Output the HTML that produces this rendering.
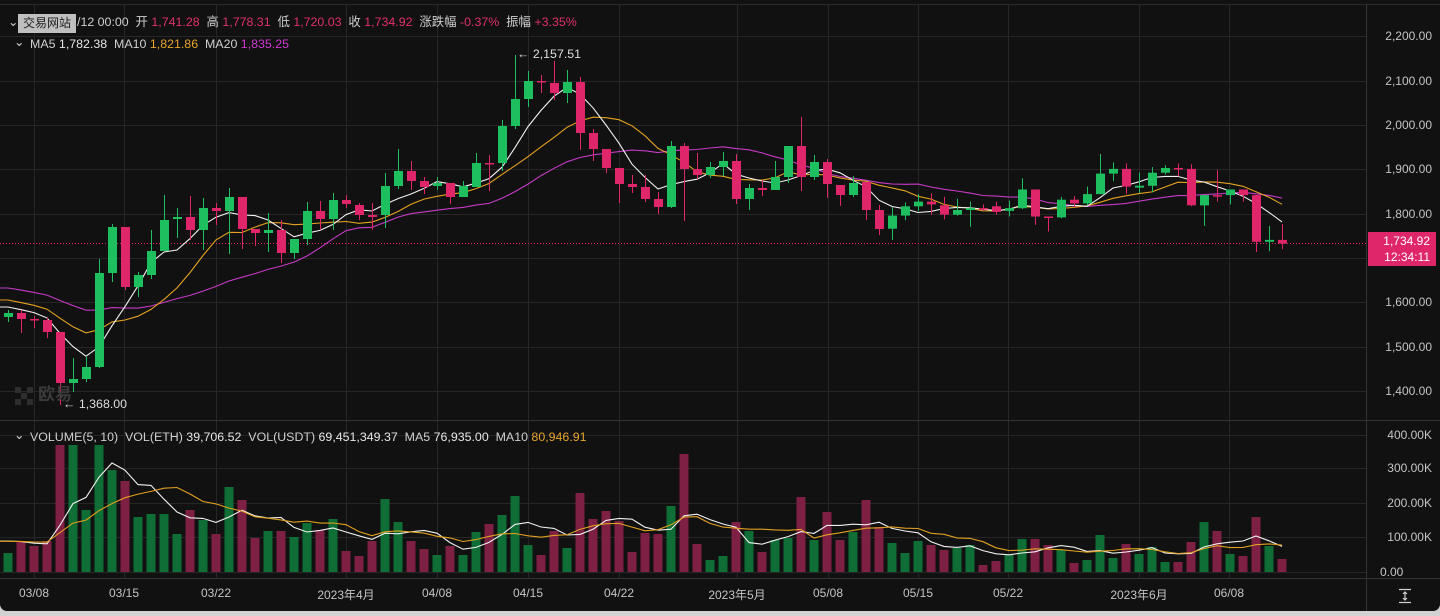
<!DOCTYPE html>
<html><head><meta charset="utf-8">
<style>
html,body{margin:0;padding:0;background:#d2d2d2;}
#w{position:relative;width:1440px;height:616px;overflow:hidden;background:#d2d2d2;font-family:"Liberation Sans","Noto Sans CJK SC",sans-serif;font-size:12px;color:#cfcfcf;}
#p{position:absolute;left:0;top:0;width:1440px;height:611px;background:#111111;border-radius:0 0 7px 7px;overflow:hidden;}
svg{position:absolute;left:0;top:0;}
.t{position:absolute;white-space:nowrap;line-height:14px;font-size:12.4px;}
.r{color:#e0306e}.o{color:#e7a52a}.m{color:#cf38cf}.wv{color:#e6e6e6}
.tip{position:absolute;left:18px;top:14px;width:58px;height:19px;background:#bfbfbf;color:#222;font-size:12px;line-height:19px;text-align:center;}
.ax{position:absolute;right:8px;color:#c4c4c4;font-size:12px;}
.dt{position:absolute;top:586px;color:#c4c4c4;font-size:12px;transform:translateX(-50%);}
</style></head><body>
<div id="w"><div id="p">
<svg id="s" width="1440" height="611" xmlns="http://www.w3.org/2000/svg"></svg>
<div class="t" style="left:8px;top:15px;color:#ccc">⌄</div>
<div class="tip">交易网站</div>
<div class="t" style="left:77px;top:15px;">/12 00:00&nbsp;&nbsp;开 <span class="r">1,741.28</span>&nbsp;&nbsp;高 <span class="r">1,778.31</span>&nbsp;&nbsp;低 <span class="r">1,720.03</span>&nbsp;&nbsp;收 <span class="r">1,734.92</span>&nbsp;&nbsp;涨跌幅 <span class="r">-0.37%</span>&nbsp;&nbsp;振幅 <span class="r">+3.35%</span></div>
<div class="t" style="left:14px;top:35px;">⌄</div>
<div class="t" style="left:30px;top:37px;">MA5 <span class="wv">1,782.38</span>&nbsp;&nbsp;MA10 <span class="o">1,821.86</span>&nbsp;&nbsp;MA20 <span class="m">1,835.25</span></div>
<div class="t" style="left:14px;top:428px;">⌄</div>
<div class="t" style="left:30px;top:430px;">VOLUME(5, 10)&nbsp;&nbsp;VOL(ETH) <span class="wv">39,706.52</span>&nbsp;&nbsp;VOL(USDT) <span class="wv">69,451,349.37</span>&nbsp;&nbsp;MA5 <span class="wv">76,935.00</span>&nbsp;&nbsp;MA10 <span class="o">80,946.91</span></div>
<div class="t" style="left:517px;top:47px;color:#ddd">← 2,157.51</div>
<div class="t" style="left:63px;top:397px;color:#ddd">← 1,368.00</div>
<div class="t" style="left:38px;top:385px;color:#3a3a3a;font-size:17px;font-weight:bold;line-height:20px">欧易</div>
<div class="ax" style="top:29px">2,200.00</div>
<div class="ax" style="top:74px">2,100.00</div>
<div class="ax" style="top:118px">2,000.00</div>
<div class="ax" style="top:162px">1,900.00</div>
<div class="ax" style="top:207px">1,800.00</div>
<div class="ax" style="top:295px">1,600.00</div>
<div class="ax" style="top:340px">1,500.00</div>
<div class="ax" style="top:384px">1,400.00</div>
<div style="position:absolute;left:1368px;top:232px;width:68px;height:34px;background:#e0266a;color:#fff;font-size:12px;line-height:16px;text-align:right;padding-top:1px;box-sizing:border-box;padding-right:6px">1,734.92<br>12:34:11</div>
<div class="ax" style="top:428px">400.00K</div>
<div class="ax" style="top:461px">300.00K</div>
<div class="ax" style="top:496px">200.00K</div>
<div class="ax" style="top:530px">100.00K</div>
<div class="ax" style="top:565px;right:auto;left:1380px">0.00</div>
<div class="dt" style="left:34px">03/08</div>
<div class="dt" style="left:124px">03/15</div>
<div class="dt" style="left:216px">03/22</div>
<div class="dt" style="left:346px">2023年4月</div>
<div class="dt" style="left:437px">04/08</div>
<div class="dt" style="left:528px">04/15</div>
<div class="dt" style="left:619px">04/22</div>
<div class="dt" style="left:737px">2023年5月</div>
<div class="dt" style="left:828px">05/08</div>
<div class="dt" style="left:918px">05/15</div>
<div class="dt" style="left:1008px">05/22</div>
<div class="dt" style="left:1139px">2023年6月</div>
<div class="dt" style="left:1229px">06/08</div>
</div></div>
<script>
var C=[[317,313,310,322],[313,319,310,333],[319,320,316,328],[320,332,318,338],[332,383,332,405],[383,379,358,392],[379,367,357,382],[367,273,259,368],[273,227,224,282],[227,287,227,290],[287,275,272,297],[275,251,230,279],[251,220,195,251],[219,217,208,238],[217,230,196,240],[230,208,198,250],[208,211,203,225],[211,197,188,254],[197,229,197,249],[229,233,229,246],[233,230,213,252],[230,253,220,263],[253,239,239,259],[239,211,202,245],[211,219,201,230],[219,200,193,230],[200,204,195,208],[205,215,203,220],[215,217,203,230],[215,186,173,228],[186,171,149,189],[171,181,161,190],[181,187,177,194],[186,183,177,190],[183,197,183,204],[197,186,181,197],[187,163,153,187],[163,164,155,191],[163,126,120,171],[126,99,55,129],[99,81,71,107],[81,82,75,93],[83,93,61,100],[93,82,70,103],[82,133,77,150],[133,149,129,161],[149,168,149,173],[168,184,168,203],[184,187,175,193],[187,199,175,202],[199,207,192,214],[207,146,141,208],[146,169,143,221],[169,175,153,179],[175,167,162,178],[167,161,152,176],[161,199,154,204],[199,188,184,210],[188,190,180,196],[190,177,161,190],[177,146,146,183],[146,177,117,191],[177,162,155,180],[162,184,159,198],[185,195,185,206],[195,183,176,197],[182,210,182,220],[210,229,205,235]];
var D=[[235,221,212,247],[221,211,207,226],[211,206,198,216],[206,209,197,220],[210,220,201,225],[220,215,203,221],[215,213,206,233],[213,213.5,209,216],[211,217,206,220],[216,213,205,222],[213,193,181,214],[193,222,193,231],[222,223,222,238],[223,204,201,224],[204,208,200,212],[208,198,190,210],[198,176,155,198],[176,171,164,184],[171,190,165,198],[191,189,175,197],[189,175,169,196],[175,170,167,177],[170,171,165,179],[171,210,166,211],[210,199,199,232],[199,200,172,206],[199,193,193,209],[193,199,193,206],[199,249,199,260],[249,247,232,259],[247,251,230,257]];
D.forEach(function(a){C.push(a.map(function(y){return 140+(y-140)*0.9333;}));});
var V=[553,541,546,541,445,445,510,445,470,481,517,514,514,534,510,520,534,487,500,538,531,531,537,523,530,519,551,556,541,499,522,541,549,555,546,555,532,524,515,496,545,555,531,548,493,519,511,521,552,533,534,506,454,544,560,556,522,531,552,540,538,497,540,512,540,532,500,527,543,553,541,545,550,548,545,565,561,555,539,539,545,550,563,560,535,558,544,554,547,562,562,542,522,531,554,556,517,546,559];
var G='#1dbf5f',R='#e0266a',VG='#0e6e35',VR='#7e1f44';
var h='';
var grid='#262626';
[36,81,125,169,214,258,302,347,391,435,468,503,537,572].forEach(function(y){h+='<line x1="0" x2="1366" y1="'+(y+.5)+'" y2="'+(y+.5)+'" stroke="'+grid+'"/>';});
[34,124,216,346,437,528,619,737,828,918,1008,1139,1229].forEach(function(x){h+='<line y1="4" y2="578" x1="'+(x+.5)+'" x2="'+(x+.5)+'" stroke="'+grid+'"/>';});
h+='<line x1="0" x2="1440" y1="4.5" y2="4.5" stroke="#2a2a2a"/>';
h+='<line x1="0" x2="1440" y1="420.5" y2="420.5" stroke="#333"/>';
h+='<line x1="0" x2="1440" y1="578.5" y2="578.5" stroke="#333"/>';
h+='<line x1="1366.5" x2="1366.5" y1="4" y2="611" stroke="#333"/>';
h+='<line x1="0" x2="1366" y1="243.5" y2="243.5" stroke="#e0266a" stroke-dasharray="1,2"/>';
h+='<clipPath id="vc"><rect x="0" y="445" width="1366" height="128"/></clipPath><g clip-path="url(#vc)">';
for(var i=0;i<C.length;i++){var x=3.5+13*i;var up=C[i][1]<C[i][0];h+='<rect x="'+x+'" y="'+V[i]+'" width="9" height="'+(572-V[i])+'" fill="'+(up?VG:VR)+'"/>';}
function ma(arr,n,pad){var out=[];for(var i=0;i<arr.length;i++){var s=0;for(var k=0;k<n;k++){var j=i-k;s+=j>=0?arr[j]:pad(j);}out.push(s/n);}return out;}
function line(vals,col){var p='0,'+vals[0].toFixed(1);for(var i=0;i<vals.length;i++)p+=' '+(8+13*i)+','+vals[i].toFixed(1);return '<polyline points="'+p+'" fill="none" stroke="'+col+'" stroke-width="1.1"/>';}
h+=line(ma(V,5,function(){return 538;}),'#f0f0f0');
h+=line(ma(V,10,function(){return 540;}),'#e0a020');
h+='</g>';
var cl=C.map(function(c){return c[1];});
var pad=function(j){if(j>=-4)return 305.5;if(j>=-9)return 293;return 276;};
h+='<clipPath id="pc"><rect x="0" y="5" width="1366" height="415"/></clipPath><g clip-path="url(#pc)">';
h+=line(ma(cl,20,pad),'#c63ac6');
h+=line(ma(cl,10,pad),'#e3a21f');
h+=line(ma(cl,5,pad),'#f2f2f2');
for(var i=0;i<C.length;i++){var c=C[i],cx=8+13*i;var up=c[1]<c[0];var col=up?G:R;var bt=Math.min(c[0],c[1]),bh=Math.max(1.5,Math.abs(c[0]-c[1]));
h+='<line x1="'+(cx+.5)+'" x2="'+(cx+.5)+'" y1="'+c[2]+'" y2="'+c[3]+'" stroke="'+col+'" stroke-width="1"/>';
h+='<rect x="'+(cx-4)+'" y="'+bt.toFixed(1)+'" width="9" height="'+bh.toFixed(1)+'" fill="'+col+'"/>';}
h+='</g>';
h+='<g fill="#2e2e2e"><rect x="15" y="387" width="6" height="6"/><rect x="27" y="387" width="6" height="6"/><rect x="21" y="393" width="6" height="6"/><rect x="15" y="399" width="6" height="6"/><rect x="27" y="399" width="6" height="6"/></g>';
h+='<g stroke="#d0d0d0" stroke-width="1.2" fill="none"><line x1="1399" x2="1411" y1="589.5" y2="589.5"/><line x1="1399" x2="1411" y1="602.5" y2="602.5"/><line x1="1405" x2="1405" y1="592" y2="600"/><polyline points="1403,594 1405,592 1407,594"/><polyline points="1403,598 1405,600 1407,598"/></g>';
document.getElementById('s').innerHTML=h;
</script>
</body></html>
